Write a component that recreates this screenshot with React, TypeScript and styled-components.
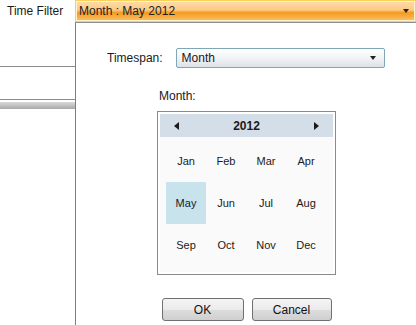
import React from 'react';
import styled, { createGlobalStyle } from 'styled-components';

const GlobalStyle = createGlobalStyle`
  html, body {
    margin: 0;
    padding: 0;
    background: #ffffff;
    font-family: 'Liberation Sans', Arial, sans-serif;
    color: #1a1a1a;
  }
`;

const Page = styled.div`
  width: 416px;
  height: 325px;
  display: flex;
  flex-direction: column;
  overflow: hidden;
`;

const TopBar = styled.div`
  display: flex;
  height: 22px;
`;

const FilterLabel = styled.div`
  width: 75px;
  box-sizing: border-box;
  padding-left: 7px;
  font-size: 12px;
  line-height: 22px;
  white-space: nowrap;
`;

const OrangeCombo = styled.div`
  flex: 1;
  box-sizing: border-box;
  display: flex;
  align-items: center;
  justify-content: space-between;
  padding: 0 6px 0 3px;
  border: 1px solid #f7d35c;
  box-shadow: inset 0 0 0 1px #fff3c9;
  background: linear-gradient(
    #fedcaa 0%,
    #fdca85 45%,
    #f49b20 58%,
    #f8ad45 80%,
    #fbc46f 100%
  );
  font-size: 12px;
  color: #222;
`;

const Main = styled.div`
  flex: 1;
  display: flex;
`;

const LeftPane = styled.div`
  width: 75px;
  display: flex;
  flex-direction: column;
`;

const Rule = styled.div<{ top: number }>`
  height: 1px;
  margin-top: ${({ top }) => top}px;
  background: #8c8c8c;
`;

const ShadowBand = styled.div`
  height: 7px;
  margin-top: 2px;
  background: linear-gradient(#dadada, #a8a8a8);
`;

const Popup = styled.div`
  flex: 1;
  border-left: 1px solid #7e7e7e;
  border-top: 1px solid #8e8e8e;
  display: flex;
  flex-direction: column;
  padding-top: 25px;
`;

const FieldRow = styled.div`
  display: flex;
  align-items: center;
  margin-left: 31px;
  gap: 13px;
`;

const Label = styled.span`
  font-size: 12px;
  color: #1a1a1a;
`;

const Select = styled.div`
  width: 209px;
  height: 20px;
  box-sizing: border-box;
  border: 1px solid #7fa6b9;
  border-radius: 2px;
  background: linear-gradient(#ffffff 0%, #f1f3f5 50%, #dde2e7 100%);
  display: flex;
  align-items: center;
  justify-content: space-between;
  padding: 0 8px 0 5px;
  font-size: 12px;
`;

const DownArrow = styled.span<{ w: number }>`
  width: 0;
  height: 0;
  border-left: ${({ w }) => w / 2}px solid transparent;
  border-right: ${({ w }) => w / 2}px solid transparent;
  border-top: ${({ w }) => Math.ceil(w / 2)}px solid #222;
`;

const MonthSection = styled.div`
  margin-left: 81px;
  margin-top: 21px;
  width: 179px;
  display: flex;
  flex-direction: column;
`;

const MonthLabel = styled(Label)`
  padding-left: 2px;
  line-height: 14px;
  margin-bottom: 8px;
`;

const Calendar = styled.div`
  height: 164px;
  box-sizing: border-box;
  border: 1px solid #8a8a8a;
  padding: 2px;
  background: #fafafa;
  display: flex;
  flex-direction: column;
  box-shadow: inset 0 0 0 2px #ffffff;
`;

const CalHeader = styled.div`
  height: 23px;
  background: #d3dee8;
  display: flex;
  align-items: center;
  justify-content: space-between;
  padding: 0 14px;
`;

const Year = styled.span`
  font-size: 12px;
  font-weight: bold;
  color: #1a1a1a;
`;

const SideArrow = styled.span<{ dir: 'left' | 'right' }>`
  width: 0;
  height: 0;
  border-top: 4px solid transparent;
  border-bottom: 4px solid transparent;
  ${({ dir }) =>
    dir === 'left' ? 'border-right: 5px solid #1a1a1a;' : 'border-left: 5px solid #1a1a1a;'}
`;

const MonthGrid = styled.div`
  display: grid;
  grid-template-columns: repeat(4, 40px);
  grid-auto-rows: 42px;
  margin: 3px 0 0 6px;
`;

const MonthCell = styled.div<{ selected?: boolean }>`
  display: flex;
  align-items: center;
  justify-content: center;
  font-size: 11px;
  color: #1a1a1a;
  border-radius: 1px;
  background: ${({ selected }) => (selected ? '#c9e3ed' : 'transparent')};
`;

const ButtonRow = styled.div`
  display: flex;
  justify-content: center;
  gap: 8px;
  margin-top: 23px;
`;

const Button = styled.div<{ w: number }>`
  width: ${({ w }) => w}px;
  height: 23px;
  box-sizing: border-box;
  border: 1px solid #707070;
  border-radius: 3px;
  background: linear-gradient(#f4f4f4 0%, #ebebeb 50%, #dddddd 51%, #cfcfcf 100%);
  display: flex;
  align-items: center;
  justify-content: center;
  font-size: 12px;
  color: #111;
`;

const months = ['Jan', 'Feb', 'Mar', 'Apr', 'May', 'Jun', 'Jul', 'Aug', 'Sep', 'Oct', 'Nov', 'Dec'];

const App = () => {
  return (
    <Page>
      <GlobalStyle />
      <TopBar>
        <FilterLabel>Time Filter</FilterLabel>
        <OrangeCombo>
          <span>Month : May 2012</span>
          <DownArrow w={7} />
        </OrangeCombo>
      </TopBar>
      <Main>
        <LeftPane>
          <Rule top={44} />
          <Rule top={32} />
          <ShadowBand />
        </LeftPane>
        <Popup>
          <FieldRow>
            <Label>Timespan:</Label>
            <Select>
              <span>Month</span>
              <DownArrow w={7} />
            </Select>
          </FieldRow>
          <MonthSection>
            <MonthLabel>Month:</MonthLabel>
            <Calendar>
              <CalHeader>
                <SideArrow dir="left" />
                <Year>2012</Year>
                <SideArrow dir="right" />
              </CalHeader>
              <MonthGrid>
                {months.map((m) => (
                  <MonthCell key={m} selected={m === 'May'}>
                    {m}
                  </MonthCell>
                ))}
              </MonthGrid>
            </Calendar>
            <ButtonRow>
              <Button w={82}>OK</Button>
              <Button w={80}>Cancel</Button>
            </ButtonRow>
          </MonthSection>
        </Popup>
      </Main>
    </Page>
  );
};

export default App;
